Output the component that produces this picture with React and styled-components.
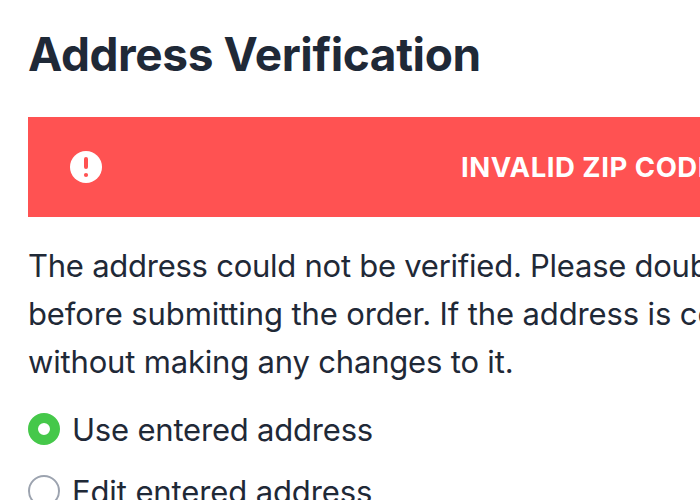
import React from "react";
import styled, { createGlobalStyle } from "styled-components";

const GlobalStyle = createGlobalStyle`
  * { box-sizing: border-box; }
  html, body { margin: 0; background: #fff; overflow: hidden; }
`;

const Page = styled.main`
  width: 1200px;
  height: 500px;
  overflow: hidden;
  padding: 22px 28px 0;
  color: #1f2937;
  font-family: Inter, sans-serif;
`;

const Title = styled.h1`
  margin: 0;
  font-size: 46px;
  line-height: 64px;
  font-weight: 700;
  letter-spacing: -0.4px;
  white-space: nowrap;
`;

const Alert = styled.div`
  display: flex;
  align-items: center;
  height: 100px;
  margin-top: 31px;
  padding-left: 42px;
  background: #ff5252;
  color: #fff;
`;

const AlertIcon = styled.svg`
  flex: none;
  width: 32px;
  height: 32px;
`;

const AlertLabel = styled.strong`
  margin-left: 359px;
  font-size: 27.5px;
  line-height: 40px;
  font-weight: 700;
  letter-spacing: 0.52px;
  white-space: nowrap;
`;

const Message = styled.p`
  margin: 25px 0 0;
  font-size: 31px;
  line-height: 48px;
`;

const Line = styled.span`
  display: block;
  letter-spacing: ${(p) => p.$tracking}px;
  white-space: nowrap;
`;

const Options = styled.div`
  display: grid;
  grid-auto-rows: 62px;
  margin-top: 12px;
`;

const Option = styled.label`
  display: flex;
  align-items: center;
  gap: 12px;
  font-size: 31px;
  letter-spacing: ${(p) => p.$tracking}px;
  white-space: nowrap;
`;

const Radio = styled.span`
  width: 32px;
  height: 32px;
  border-radius: 50%;
  background: #fff;
  border: ${(p) => (p.$checked ? "10px solid #45c84a" : "2px solid #9ca3af")};
`;

export default function App() {
  return (
    <>
      <GlobalStyle />
      <Page>
        <Title>Address Verification</Title>
        <Alert>
          <AlertIcon viewBox="0 0 32 32">
            <circle cx="16" cy="16" r="16" fill="#fff" />
            <path d="M16 8v8" stroke="#ff5252" strokeWidth="4" strokeLinecap="round" />
            <circle cx="16" cy="24" r="2.1" fill="#ff5252" />
          </AlertIcon>
          <AlertLabel>INVALID ZIP CODE</AlertLabel>
        </Alert>
        <Message>
          <Line $tracking={-0.25}>The address could not be verified. Please double check</Line>
          <Line $tracking={-0.12}>before submitting the order. If the address is correct</Line>
          <Line $tracking={-0.18}>without making any changes to it.</Line>
        </Message>
        <Options>
          <Option $tracking={-0.2}><Radio $checked />Use entered address</Option>
          <Option $tracking={-0.12}><Radio />Edit entered address</Option>
        </Options>
      </Page>
    </>
  );
}
